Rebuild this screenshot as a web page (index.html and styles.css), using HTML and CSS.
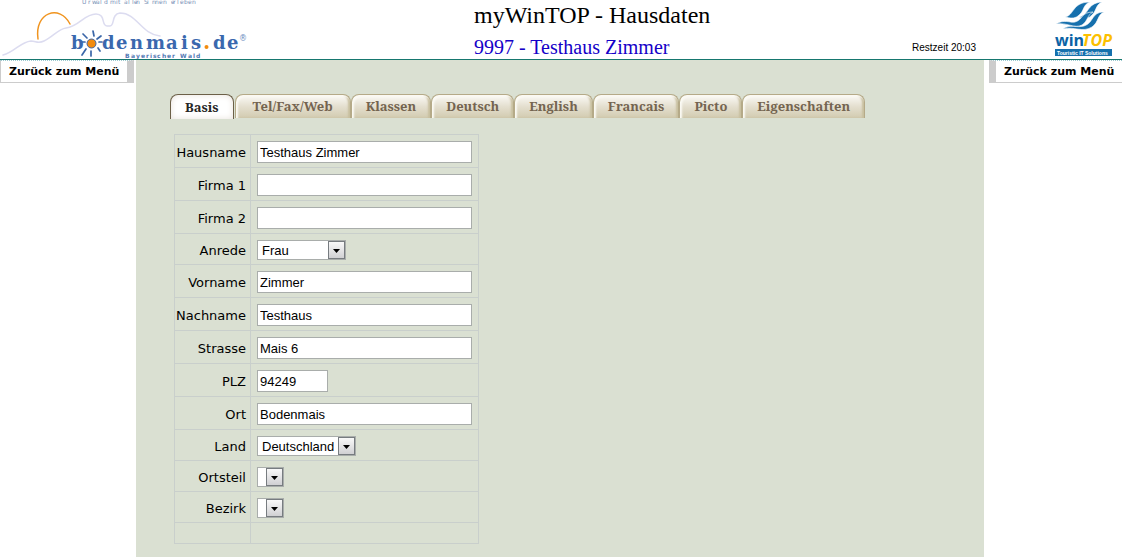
FILE: index.html
```html
<!DOCTYPE html>
<html lang="de">
<head>
<meta charset="utf-8">
<title>myWinTOP - Hausdaten</title>
<link rel="stylesheet" href="styles.css">
</head>
<body>
<header class="header">
  <svg class="logo-region" width="250" height="59" viewBox="0 0 250 59" role="img" aria-label="bodenmais.de">
    <g fill="none" stroke-linecap="round">
      <path d="M3 55C15 52 20 42 31 41C36 41 38 44 44 41C53 37 58 29 66 28C80 26 84 14 96 14C106 14 101 26 107 26H110C115 26 111 14 120 13C137 13 141 34 160 36" stroke="#dcdcf0" stroke-width="1.5"/>
      <path d="M38 39C34 12 60 4 70 24" stroke="#f0941f" stroke-width="1.5"/>
      <path d="M93 31L94 36M101 36L97 39M102 42H99M98 48L100 51M91 51V56M86 49L82 55M85 42H82M87 38L83 34" stroke="#3a66a8" stroke-width="1.7"/>
    </g>
    <circle cx="91.500" cy="43.500" r="4.500" fill="#f28c10" stroke="#3a66a8"/>
    <text class="logo-tag" x="82 88 92 96 100 104 107 110 116 118 121 124 128 132 134 136 140 144 147 152 155 159 163 167 171 173 177 180 184 188 192 196" y="4">Urwald mit allen Sinnen erleben</text>
    <text class="logo-name" x="71" y="49">b</text>
    <text class="logo-name" x="102 116 130 146 166 181 191" y="49">denmais</text>
    <circle cx="206.500" cy="47" r="2" fill="#f28c10"/>
    <text class="logo-name" x="213 227" y="49">de</text>
    <text class="logo-reg" x="239" y="41">®</text>
    <text class="logo-sub" x="125 131 136 141 146 150 153 157 162 167 172 175 180 188 193 196" y="58">Bayerischer Wald</text>
  </svg>
  <div class="heading">
    <h1 class="title">myWinTOP - Hausdaten</h1>
    <p class="house">9997 - Testhaus Zimmer</p>
  </div>
  <p class="timer">Restzeit 20:03</p>
  <svg class="logo-wintop" width="60" height="59" viewBox="0 0 60 59" role="img" aria-label="winTOP Touristic IT Solutions">
    <g fill="#1670ad" stroke="#fff" stroke-width=".6">
      <path d="M11 17C20 16 18 2 36 2C28 5 31 11 24 16C20 19 16 18 11 17Z"/>
      <path d="M25 17C35 16 32 3 48 2C41 5 43 11 37 16C32 20 29 18 25 17Z"/>
      <path d="M2 24C10 19 16 23 21 22C29 20 27 12 39 12C33 15 34 21 28 25C20 29 13 22 2 24Z"/>
      <path d="M9 29C16 24 23 28 30 26C40 23 37 12 50 12C43 15 45 22 38 27C28 33 21 26 9 29Z"/>
    </g>
    <rect x="1" y="49" width="57" height="7" fill="#1670ad"/>
    <text class="wintop-win" x="1" y="46">win</text>
    <text class="wintop-top" x="28" y="46">TOP</text>
    <text class="wintop-sub" x="3" y="55">Touristic IT Solutions</text>
  </svg>
</header>
<div class="page">
  <a class="back back-left" href="#menu">Zurück zum Menü</a>
  <main class="content">
    <nav class="tabs">
      <a class="tab tab-active" href="#basis">Basis</a>
      <a class="tab tab-wide" href="#tel">Tel/Fax/Web</a>
      <a class="tab" href="#klassen">Klassen</a>
      <a class="tab" href="#deutsch">Deutsch</a>
      <a class="tab" href="#english">English</a>
      <a class="tab" href="#francais">Francais</a>
      <a class="tab" href="#picto">Picto</a>
      <a class="tab" href="#eigenschaften">Eigenschaften</a>
    </nav>
    <form>
      <table class="form">
        <tr><th><label for="hausname">Hausname</label></th><td><input class="field" id="hausname" type="text" value="Testhaus Zimmer"></td></tr>
        <tr><th><label for="firma1">Firma 1</label></th><td><input class="field" id="firma1" type="text"></td></tr>
        <tr><th><label for="firma2">Firma 2</label></th><td><input class="field" id="firma2" type="text"></td></tr>
        <tr><th><label for="anrede">Anrede</label></th><td><select class="select select-medium" id="anrede"><option>Frau</option></select></td></tr>
        <tr><th><label for="vorname">Vorname</label></th><td><input class="field" id="vorname" type="text" value="Zimmer"></td></tr>
        <tr><th><label for="nachname">Nachname</label></th><td><input class="field" id="nachname" type="text" value="Testhaus"></td></tr>
        <tr><th><label for="strasse">Strasse</label></th><td><input class="field" id="strasse" type="text" value="Mais 6"></td></tr>
        <tr><th><label for="plz">PLZ</label></th><td><input class="field field-short" id="plz" type="text" value="94249"></td></tr>
        <tr><th><label for="ort">Ort</label></th><td><input class="field" id="ort" type="text" value="Bodenmais"></td></tr>
        <tr><th><label for="land">Land</label></th><td><select class="select select-wide" id="land"><option>Deutschland</option></select></td></tr>
        <tr><th><label for="ortsteil">Ortsteil</label></th><td><select class="select" id="ortsteil"><option></option></select></td></tr>
        <tr><th><label for="bezirk">Bezirk</label></th><td><select class="select" id="bezirk"><option></option></select></td></tr>
        <tr class="spacer"><th></th><td></td></tr>
      </table>
    </form>
  </main>
  <a class="back back-right" href="#menu">Zurück zum Menü</a>
</div>
</body>
</html>
```
FILE: styles.css
```css
* { box-sizing: border-box; }
body {
  margin: 0;
  min-height: 100vh;
  display: flex;
  flex-direction: column;
  background: #fff;
  color: #000;
  font-family: Verdana, "DejaVu Sans", sans-serif;
}
.header {
  display: grid;
  grid-template-columns: 474px 1fr auto 60px;
  padding-right: 8px;
  border-bottom: 1px solid #16776f;
}
.logo-region, .logo-wintop { display: block; }
.title, .house, .timer { margin: 0; }
.title { font: 24px/30px "Liberation Serif", serif; }
.house { font: 20px/34px "Liberation Serif", serif; color: #1400c8; }
.heading { height: 59px; white-space: nowrap; }
.timer {
  align-self: end;
  margin-right: 78px;
  font-family: "Liberation Sans", sans-serif;
  font-size: 10px;
  line-height: 22px;
}
.logo-tag { font: 6px "DejaVu Sans", sans-serif; fill: #7890b8; }
.logo-name { font: bold 18px "DejaVu Serif", serif; fill: #3a68ae; }
.logo-reg { font: 8px "DejaVu Sans", sans-serif; fill: #6d8cc0; }
.logo-sub { font: bold 6px "DejaVu Sans", sans-serif; fill: #5479b4; }
.wintop-win { font: bold 16px "Open Sans", sans-serif; fill: #0a63a5; }
.wintop-top { font: italic bold 16px "Open Sans", sans-serif; fill: #fcc000; }
.wintop-sub { font: bold 5px "Liberation Sans", sans-serif; fill: #fff; }

.page {
  flex: 1;
  display: grid;
  grid-template-columns: 134px 1fr 133px;
  align-items: start;
}
.back {
  padding: 0 0 0 8px;
  border: 1px solid #ccc;
  border-top: 1px dotted #9ccbd0;
  color: #000;
  font-size: 11px;
  font-weight: bold;
  line-height: 21px;
  text-decoration: none;
  white-space: nowrap;
}
.back-left { border-right: 7px solid #ccc; }
.back-right { border-left: 7px solid #ccc; border-right: 0; }
.content {
  align-self: stretch;
  margin: 0 5px 0 2px;
  padding: 34px;
  padding-bottom: 12px;
  background: #dae0d2;
}
.tabs { display: flex; align-items: flex-start; }
.tab {
  padding: 0 14px;
  border: 1px solid #b5aa88;
  border-bottom: 0;
  border-radius: 8px 8px 0 0;
  background: linear-gradient(#fbfaf6, #e4dfcf 50%, #d2cbb0);
  box-shadow: inset 2px 2px 2px #fbfaf4, inset -2px 0 2px #c8bf9f;
  color: #746450;
  font: bold 13px/23px "Droid Serif", "Noto Serif", "DejaVu Serif", serif;
  text-align: center;
  text-decoration: none;
  white-space: nowrap;
}
.tab-wide { min-width: 116px; }
.tab-active {
  margin-right: 1px;
  border-color: #6c6048;
  background: #fff;
  box-shadow: inset 0 0 6px #e8e2dc;
  color: #262626;
  line-height: 24px;
}
.form {
  margin: 15px 0 0 4px;
  border-collapse: collapse;
  font-size: 13px;
}
.form th, .form td { border: 1px solid #c9cfcc; }
.form th {
  width: 76px;
  padding: 3px 4px 0 1px;
  font-weight: normal;
  text-align: right;
}
.form td { padding: 6px 6px 4px; }
.form .spacer { height: 21px; }
.form .spacer th, .form .spacer td { padding: 0; }
.field, .select {
  display: block;
  margin: 0;
  border: 1px solid #a9adab;
  border-radius: 0;
  background: #fff;
  color: #000;
  font: 13px "Liberation Sans", sans-serif;
}
.field { width: 215px; height: 22px; padding: 1px 2px; }
.field-short { width: 71px; }
.select {
  appearance: none;
  width: 27px;
  height: 20px;
  padding: 0 17px 0 4px;
  background: #fff url("data:image/svg+xml,%3Csvg xmlns='http://www.w3.org/2000/svg' width='17' height='18'%3E%3ClinearGradient id='g' x2='0' y2='1'%3E%3Cstop stop-color='%23fafafa'/%3E%3Cstop offset='1' stop-color='%23cfcfd2'/%3E%3C/linearGradient%3E%3Crect x='.5' y='.5' width='16' height='17' fill='url(%23g)' stroke='%23777c80'/%3E%3Cpath d='M5 8h7l-3.500 4z'/%3E%3C/svg%3E") no-repeat right center;
}
.select-medium { width: 89px; }
.select-wide { width: 99px; }
```
